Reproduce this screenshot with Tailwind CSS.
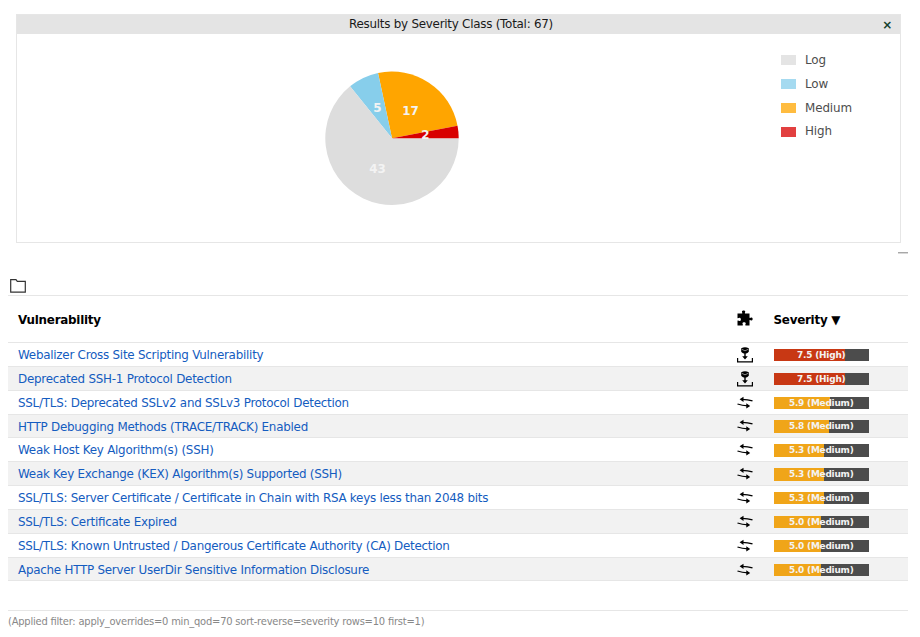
<!DOCTYPE html>
<html lang="en">
<head>
<meta charset="utf-8">
<title>Results</title>
<script src="https://cdn.jsdelivr.net/npm/@tailwindcss/browser@4"></script>
</head>
<body class="bg-white font-['DejaVu_Sans',sans-serif] text-[11.92px] tracking-[-0.25px] [font-feature-settings:'liga'_1] text-black w-[920px] h-[637px] overflow-hidden">
<svg class="hidden">
  <symbol id="package" viewBox="0 0 16 16">
    <path d="M4.200 1.200Q8-.8 11.800 1.200V4.800Q11 6.300 8 7 5 6.300 4.200 4.800z"/>
    <path d="M4.800 2.300 8 3.800 11.200 2.300" fill="none" stroke="#aaa" stroke-width=".8"/>
    <path d="M7.300 6.500h1.400v2.700h2.100L8 12.500 5.200 9.200h2.100z"/>
    <path d="M.6 11v3.900h14.800V11" fill="none" stroke="#000" stroke-width="1.200"/>
  </symbol>
  <symbol id="swap" viewBox="0 0 16 16">
    <path d="M5 4.300 Q11 4.300 15.500 5.900M.5 9 Q5 10.700 11 10.900" fill="none" stroke="#000" stroke-width="1.300"/>
    <path d="M2.600 4.200 6.500 1.700v5.200zM13.200 10.900 9.300 8.300v5.200z"/>
  </symbol>
</svg>
<main class="pt-[14px] pl-[8px] pr-[12px]">
  <section class="ml-2 mr-[7px] h-[229px] border border-[#e6e6e6]">
    <header class="relative h-[19px] bg-[#e4e4e4] text-center leading-[19px] text-[#1a1a1a] pr-[15px]">Results by Severity Class (Total: 67)
      <span class="absolute right-[8px] top-[0.500px] font-bold text-[12px] text-[#12402c]">×</span>
    </header>
    <div class="relative h-[208px]">
      <svg class="block" width="883" height="208" viewBox="17 34 883 208">
        <g transform="translate(392 138.200)">
          <path fill="#ffa500" d="M0 0 65.530-12.440A66.700 66.700 0 0 0-13.970-65.220z"/>
          <path fill="#87ceeb" d="M0 0-13.970-65.220A66.700 66.700 0 0 0-41.940-51.860z"/>
          <path fill="#ddd" d="M0 0-41.940-51.860A66.700 66.700 0 1 0 66.700 0z"/>
          <path fill="#d80000" d="M0 0H66.700A66.700 66.700 0 0 0 65.530-12.440z"/>
        </g>
        <g fill="#f3f3f3" font-size="11.920" font-weight="bold" text-anchor="middle" letter-spacing="0">
          <text x="377.500" y="172.500">43</text><text x="377.500" y="111.500">5</text><text x="410.500" y="114.500">17</text><text x="425.500" y="139">2</text>
        </g>
      </svg>
      <ul class="absolute left-[764px] top-[14.500px] text-[#4d4d4d] tracking-[-0.1px]">
        <li class="flex h-[23.830px] items-center gap-[9px]"><i class="h-[10px] w-[15px] bg-[#e4e4e4]"></i><span class="pt-[2px]">Log</span></li>
        <li class="flex h-[23.830px] items-center gap-[9px]"><i class="h-[10px] w-[15px] bg-[#a5daf0]"></i><span class="pt-[2px]">Low</span></li>
        <li class="flex h-[23.830px] items-center gap-[9px]"><i class="h-[10px] w-[15px] bg-[#ffbc40]"></i><span class="pt-[1px]">Medium</span></li>
        <li class="flex h-[23.830px] items-center gap-[9px]"><i class="h-[10px] w-[15px] bg-[#e24040]"></i><span class="pt-[1px]">High</span></li>
      </ul>
    </div>
  </section>
  <div class="ml-auto mt-[9px] h-[2px] w-[10px] border-b border-[#d8d8d8] bg-[#a8a8a8]"></div>
  <div class="h-[41px] pt-[25px]">
    <svg class="ml-[2px] block" width="16" height="14" viewBox="0 0 16 14" fill="none" stroke="#333" stroke-width="1.200"><path d="M.7.700H6L7.300 2.300H15.300V13.200H.700z"/></svg>
  </div>
  <div class="flex h-[48px] items-center border-y border-[#e6e6e6] pl-[10px] font-bold">
    <span class="w-[719px] pt-[3px]">Vulnerability</span>
    <svg class="-mt-[3px]" width="16" height="16" viewBox="0 0 16 16"><path d="M.5 3.500H5.200C5.700 2.600 4.700 2.200 5 1.200 5.300.2 8 .2 8.200 1.200 8.400 2.200 7.500 2.600 8 3.500H12.500V7.800C13.300 8.300 13.800 7.200 14.700 7.400 16 7.700 16 10.300 14.700 10.600 13.800 10.800 13.300 9.700 12.500 10.200V15.500H8.500C7.800 14.500 9 14.200 8.700 13 8.400 11.900 5.800 11.900 5.500 13 5.200 14.200 6.400 14.500 5.700 15.500H.500V10.800C1.200 10 2 11.300 3 11 4.200 10.600 4.200 8.100 3 7.700 2 7.400 1.200 8.600.5 8z"/></svg>
    <span class="ml-[20.500px] pt-[3px]">Severity ▼</span>
  </div>
  <div id="results"></div>
  <footer class="mt-[29px] border-t border-[#e6e6e6] pt-[4px] text-[9.930px] leading-[13px] tracking-[-0.205px] text-[#888]">(Applied filter: apply_overrides=0 min_qod=70 sort-reverse=severity rows=10 first=1)</footer>
</main>
<script>
const results = [
  ["Webalizer Cross Site Scripting Vulnerability", 7.5],
  ["Deprecated SSH-1 Protocol Detection", 7.5],
  ["SSL/TLS: Deprecated SSLv2 and SSLv3 Protocol Detection", 5.9],
  ["HTTP Debugging Methods (TRACE/TRACK) Enabled", 5.8],
  ["Weak Host Key Algorithm(s) (SSH)", 5.3],
  ["Weak Key Exchange (KEX) Algorithm(s) Supported (SSH)", 5.3],
  ["SSL/TLS: Server Certificate / Certificate in Chain with RSA keys less than 2048 bits", 5.3],
  ["SSL/TLS: Certificate Expired", 5.0],
  ["SSL/TLS: Known Untrusted / Dangerous Certificate Authority (CA) Detection", 5.0],
  ["Apache HTTP Server UserDir Sensitive Information Disclosure", 5.0]
];
document.getElementById("results").innerHTML = results.map(([name, score]) => {
  const high = score >= 7;
  return `<div class="flex h-[23.850px] items-center border-b border-[#e6e6e6] pl-[10px] even:bg-[#f2f2f2]">
    <a class="w-[719px] whitespace-nowrap pt-[3px] text-[#145cc0]">${name}</a>
    <svg class="mt-[1px]" width="16" height="16"><use href="#${high ? "package" : "swap"}"/></svg>
    <div class="relative ml-[20.500px] mt-[1.500px] h-[12.500px] w-[95.500px] bg-[#4c4c4c]">
      <div class="h-full ${high ? "bg-[#c83814]" : "bg-[#f0a519]"}" style="width:${score * 10}%"></div>
      <span class="absolute inset-0 text-center text-[8.940px] font-bold leading-[13px] tracking-[-0.2px] text-[#f3f3f3]">${score.toFixed(1)} (${high ? "High" : "Medium"})</span>
    </div>
  </div>`;
}).join("");
</script>
</body>
</html>
